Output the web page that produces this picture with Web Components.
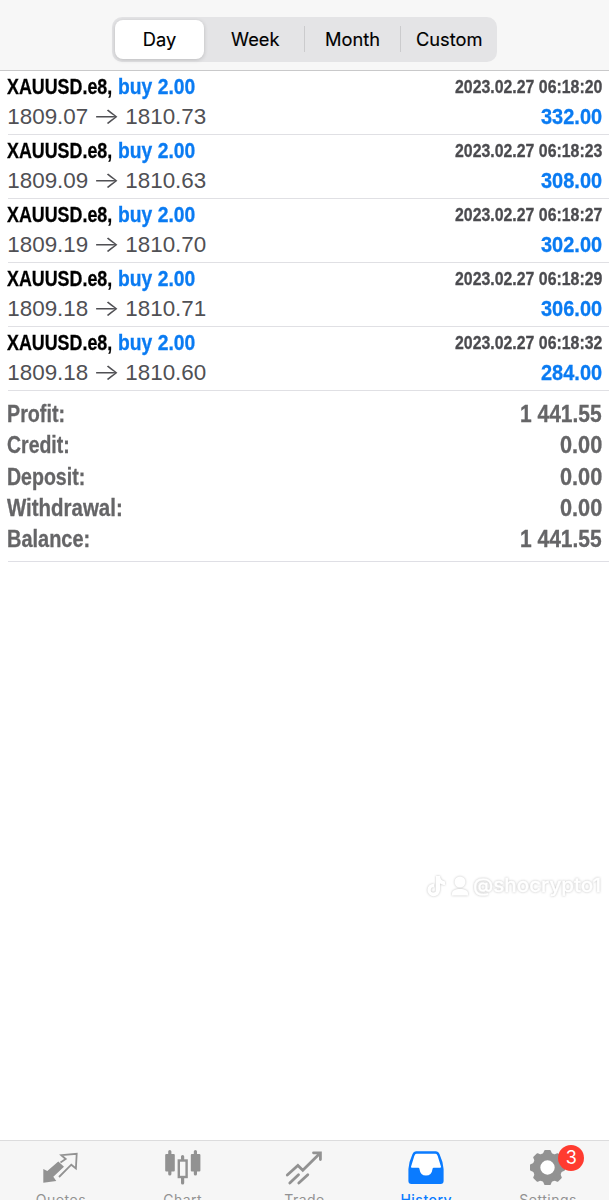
<!DOCTYPE html>
<html lang="en">
<head>
<meta charset="utf-8">
<title>History</title>
<style>
  body {
    margin: 0;
    background: #fff;
    font-family: "Liberation Sans", Arial, sans-serif;
  }
</style>
</head>
<body>
<history-app></history-app>

<script>
const define = (name, html, setup) => {
  const template = document.createElement('template')
  template.innerHTML = html

  window.customElements.define(name, class extends HTMLElement {
    connectedCallback () {
      if (this.shadowRoot) return
      this.attachShadow({ mode: 'open' })
      this.shadowRoot.appendChild(template.content.cloneNode(true))
      if (setup) setup(this, this.shadowRoot)
    }
  })
}

// squeezes its text horizontally to the given width
define('narrow-text', `
  <style>
    :host { display: block; flex: none; white-space: nowrap; font-weight: bold; -webkit-text-stroke: .3px currentColor; }
    span { display: inline-block; transform-origin: 0 50%; }
  </style>
  <span><slot></slot></span>
`, (host, root) => {
  const width = Number(host.getAttribute('width'))
  const span = root.querySelector('span')
  host.style.width = width + 'px'
  span.style.transform = `scaleX(${width / span.offsetWidth})`
})

define('period-picker', `
  <style>
    :host {
      display: flex;
      box-sizing: border-box;
      width: 385px;
      height: 45px;
      padding: 3px 0 3px 3px;
      border-radius: 10px;
      background: #e4e4e6;
      font: 400 18.3px/38px Inter, "Liberation Sans", sans-serif;
      color: #000;
    }
  </style>
  <slot></slot>
`)

define('period-option', `
  <style>
    :host { display: flex; flex: 1; align-items: center; }
    span { flex: 1; text-align: center; -webkit-text-stroke: .15px #000; }
    :host([divided])::before { content: ""; width: 1px; height: 26px; background: #cbcbcd; }
    :host([selected]) {
      flex: 0 0 89px;
      margin-right: 3px;
      border-radius: 8px;
      background: #fff;
      box-shadow: 0 1px 4px rgba(0, 0, 0, .18);
    }
  </style>
  <span><slot></slot></span>
`)

define('deal-row', `
  <style>
    :host {
      display: block;
      box-sizing: border-box;
      height: 64px;
      margin-left: 8px;
      padding: 0 7.5px 0 0;
      border-bottom: 1px solid #e0e0e4;
      line-height: 30px;
    }
    .line { display: flex; height: 31px; margin-left: -.7px; font-size: 22.8px; }
    .symbol { color: #000; }
    .side { margin-left: 5.5px; color: #0a7bf2; }
    .time { margin-left: auto; font-size: 18.8px; line-height: 31px; color: #4b4b4f; }
    .prices { font-size: 22.4px; color: #505054; }
    .price { width: 81px; }
    .arrow {
      width: 37px;
      text-align: center;
      font-family: Inter, sans-serif;
      font-weight: 300;
      line-height: 28px;
      transform: scaleX(1.3);
    }
    .profit { margin-left: auto; font-size: 22.6px; color: #0a7bf2; }
  </style>
  <div class="line">
    <narrow-text class="symbol" width="105">XAUUSD.e8,</narrow-text>
    <narrow-text class="side" width="77">buy 2.00</narrow-text>
    <narrow-text class="time" width="147"></narrow-text>
  </div>
  <div class="line prices">
    <span class="price open"></span>
    <span class="arrow">→</span>
    <span class="price close"></span>
    <narrow-text class="profit" width="61"></narrow-text>
  </div>
`, (host, root) => {
  for (const name of ['time', 'open', 'close', 'profit']) {
    root.querySelector('.' + name).textContent = host.getAttribute(name)
  }
  // the text came after the elements were measured
  for (const el of root.querySelectorAll('.time, .profit')) {
    el.replaceWith(el.cloneNode(true))
  }
})

define('summary-list', `
  <style>
    :host {
      display: block;
      box-sizing: border-box;
      height: 171px;
      margin-left: 8px;
      padding: 7px 7px 0 0;
      border-bottom: 1px solid #dfdfe5;
    }
  </style>
  <slot></slot>
`)

define('summary-line', `
  <style>
    :host {
      display: flex;
      justify-content: space-between;
      height: 31.35px;
      margin-left: -1px;
      font-size: 23.8px;
      line-height: 31.35px;
      color: #656567;
    }
  </style>
  <slot></slot>
`)

define('author-mark', `
  <style>
    :host {
      position: absolute;
      left: 426px;
      top: 872px;
      display: flex;
      align-items: center;
      gap: 4px;
      height: 28px;
      color: #fff;
      font: 500 19px/28px Inter, sans-serif;
      filter: drop-shadow(0 .5px 1px rgba(0, 0, 0, .25));
    }
    svg { display: block; fill: #fff; }
    narrow-text { font-weight: 500; }
  </style>
  <svg width="21" height="23" viewBox="0 0 21 23"><path d="M10 1h4c.2 3 2 5 5 5.500v3.500c-2 0-3.700-.6-5-1.500v6.500a6.300 6.300 0 1 1-6-6.300v3.700a2.600 2.600 0 1 0 2 2.600z"/></svg>
  <svg width="18" height="22" viewBox="0 0 18 22"><circle cx="9" cy="7" r="5.500"/><path d="M1 20.500v-2c0-3 3-4.500 8-4.500s8 1.500 8 4.500v2z"/></svg>
  <narrow-text width="128"><slot></slot></narrow-text>
`)

define('tab-bar', `
  <style>
    :host {
      display: flex;
      box-sizing: border-box;
      height: 60px;
      border-top: 1px solid #dcdcdd;
      background: #f6f6f6;
      overflow: hidden;
    }
  </style>
  <slot></slot>
`)

define('tab-item', `
  <style>
    :host {
      display: flex;
      flex: 1;
      flex-direction: column;
      align-items: center;
      position: relative;
      min-width: 0;
      color: #929292;
      font: 400 14px/18px Inter, "Liberation Sans", sans-serif;
      letter-spacing: .5px;
    }
    :host([active]) { color: #0a7bff; font-weight: 500; }
    .icon { height: 50px; }
    ::slotted(svg) { display: block; width: 40px; height: 51px; }
    .badge {
      position: absolute;
      left: 71px;
      top: 4px;
      width: 26px;
      height: 26px;
      border-radius: 50%;
      background: #ff3b30;
      color: #fff;
      font-size: 18px;
      line-height: 26px;
      letter-spacing: 0;
      text-align: center;
    }
    .badge:empty { display: none; }
  </style>
  <div class="icon"><slot name="icon"></slot></div>
  <span><slot></slot></span>
  <span class="badge"></span>
`, (host, root) => {
  root.querySelector('.badge').textContent = host.getAttribute('badge') || ''
})

// one tooth of the settings gear, turned around its centre
const tooth = angle => `<path transform="rotate(${angle} 19.500 26.500)" d="M15.500 14 17.200 10H21.800L23.500 14z"/>`

// icon boxes are 40x51, starting right under the border of the bar
define('history-app', `
  <style>
    :host {
      display: flex;
      flex-direction: column;
      position: relative;
      height: 1200px;
      overflow: hidden;
    }
    header {
      display: flex;
      box-sizing: border-box;
      height: 71px;
      padding: 16.5px 0 0 112px;
      border-bottom: 1px solid #c9c9ca;
      background: #f7f7f7;
    }
    main { flex: 1; }
  </style>
  <header>
    <period-picker>
      <period-option selected>Day</period-option>
      <period-option>Week</period-option>
      <period-option divided>Month</period-option>
      <period-option divided>Custom</period-option>
    </period-picker>
  </header>
  <main>
    <deal-row time="2023.02.27 06:18:20" open="1809.07" close="1810.73" profit="332.00"></deal-row>
    <deal-row time="2023.02.27 06:18:23" open="1809.09" close="1810.63" profit="308.00"></deal-row>
    <deal-row time="2023.02.27 06:18:27" open="1809.19" close="1810.70" profit="302.00"></deal-row>
    <deal-row time="2023.02.27 06:18:29" open="1809.18" close="1810.71" profit="306.00"></deal-row>
    <deal-row time="2023.02.27 06:18:32" open="1809.18" close="1810.60" profit="284.00"></deal-row>
    <summary-list>
      <summary-line><narrow-text width="58">Profit:</narrow-text><narrow-text width="82">1 441.55</narrow-text></summary-line>
      <summary-line><narrow-text width="63">Credit:</narrow-text><narrow-text width="42">0.00</narrow-text></summary-line>
      <summary-line><narrow-text width="78">Deposit:</narrow-text><narrow-text width="42">0.00</narrow-text></summary-line>
      <summary-line><narrow-text width="116">Withdrawal:</narrow-text><narrow-text width="42">0.00</narrow-text></summary-line>
      <summary-line><narrow-text width="83">Balance:</narrow-text><narrow-text width="82">1 441.55</narrow-text></summary-line>
    </summary-list>
  </main>
  <author-mark>@shocrypto1</author-mark>
  <tab-bar>
    <tab-item>
      <svg slot="icon" viewBox="0 0 40 51">
        <path fill="#929292" d="M2.300 28 6.300 30 17.300 20.400 23 25.700 12.300 35.700 15.300 40 2.300 41.700z"/>
        <path fill="none" stroke="#929292" stroke-width="1.800" d="M19.500 21.500 24.700 18 20.300 14.200 35.700 12.800 34.900 27.500 30.300 23.700 18 36"/>
      </svg>
      Quotes
    </tab-item>
    <tab-item>
      <svg slot="icon" viewBox="0 0 40 51">
        <path fill="none" stroke="#929292" stroke-width="3.200" stroke-linecap="round" d="M6.800 10.500V33M19.600 15.500V18M19.600 37V42M32.400 10.500V33"/>
        <rect x="2.200" y="13" width="9.600" height="17.500" rx="1" fill="#929292"/>
        <rect x="27.800" y="13" width="9.600" height="17.500" rx="1" fill="#929292"/>
        <rect x="15.800" y="19.500" width="7.800" height="16.500" fill="none" stroke="#929292" stroke-width="2.400"/>
      </svg>
      Chart
    </tab-item>
    <tab-item>
      <svg slot="icon" viewBox="0 0 40 51">
        <path fill="none" stroke="#929292" stroke-width="2.800" stroke-linecap="round" d="M3.300 34 13.900 24.500 18.800 29.300 35.500 12.800M5.800 42 14.500 33.700M14.800 42 23.800 33.700M29.500 11.800H36.400V18.500"/>
      </svg>
      Trade
    </tab-item>
    <tab-item active>
      <svg slot="icon" viewBox="0 0 40 51">
        <path fill="#fff" d="M9 12H31L36 27V35H4V27z"/>
        <path fill="#0a7bff" fill-rule="evenodd" d="M10 10.300H30Q32.500 10.300 33.500 13Q37 20.500 37.600 28V40Q37.600 43 34.600 43H5.400Q2.400 43 2.400 40V28Q3 20.500 6.500 13Q7.500 10.300 10 10.300zM10.500 12.800Q9 12.800 8.300 15L5 25.800Q4.800 26.800 6 26.800H12.500Q13.500 26.800 13.600 28.500Q14.300 34.500 20 34.500T26.400 28.500Q26.500 26.800 27.500 26.800H34Q35.200 26.800 35 25.800L31.700 15Q31 12.800 29.500 12.800z"/>
      </svg>
      History
    </tab-item>
    <tab-item badge="3">
      <svg slot="icon" viewBox="0 0 40 51">
        <circle cx="19.500" cy="26.500" r="7.600" fill="#fff"/>
        <circle cx="19.500" cy="26.500" r="11" fill="none" stroke="#929292" stroke-width="7.600"/>
        <g fill="#929292" stroke="#929292" stroke-width="2" stroke-linejoin="round">
          ${[0, 45, 90, 135, 180, 225, 270, 315].map(tooth).join('')}
        </g>
      </svg>
      Settings
    </tab-item>
  </tab-bar>
`)
</script>
</body>
</html>
